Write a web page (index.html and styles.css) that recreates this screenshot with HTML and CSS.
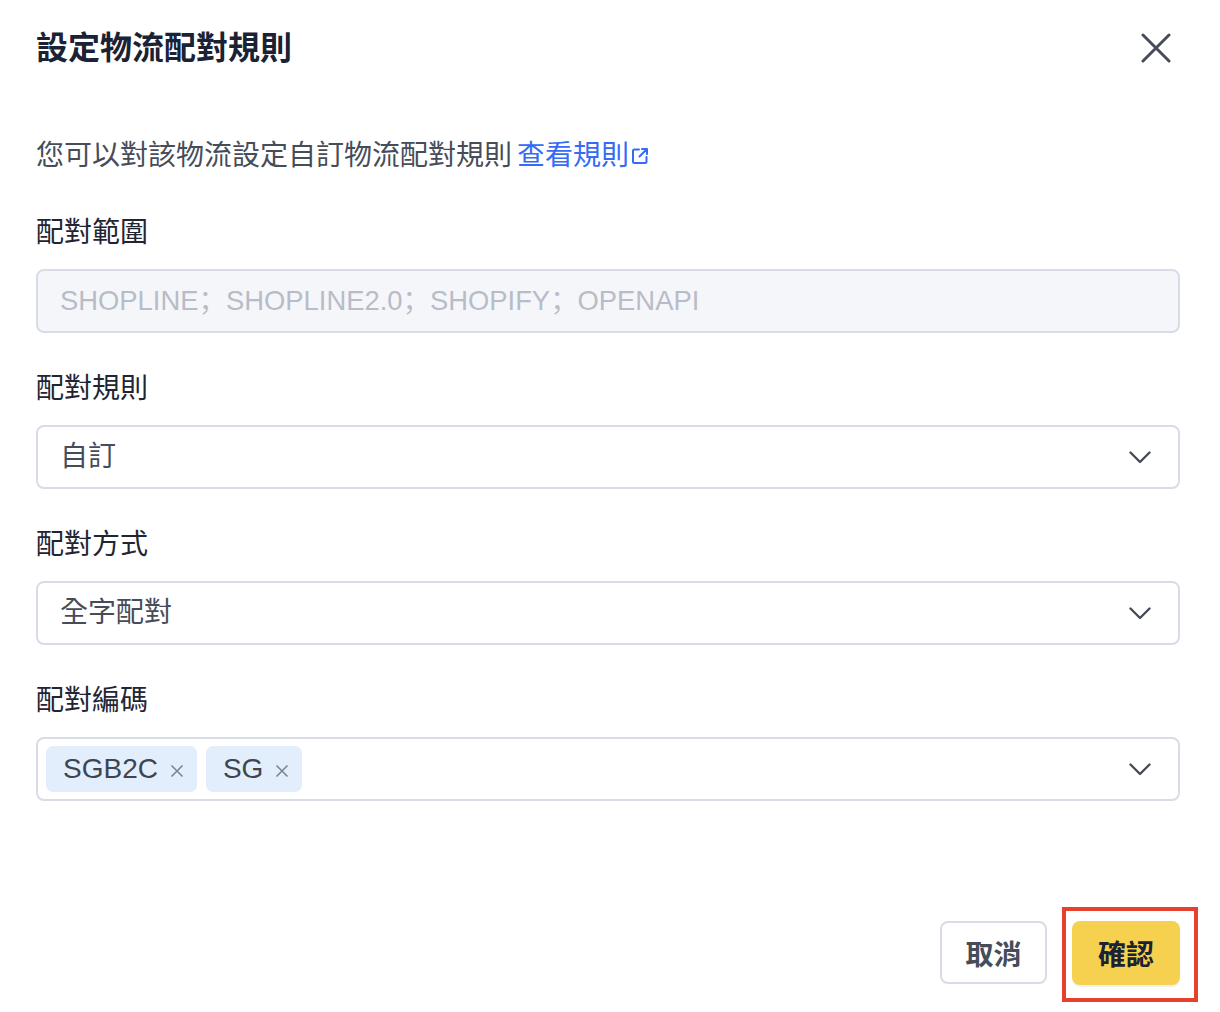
FILE: index.html
```html
<!DOCTYPE html>
<html lang="zh-Hant">
<head>
<meta charset="utf-8">
<title>設定物流配對規則</title>
<link rel="stylesheet" href="styles.css">
</head>
<body>
<div class="dialog">
  <header class="dialog-header">
    <h1 class="dialog-title">設定物流配對規則</h1>
    <button class="close-btn" aria-label="關閉">
      <svg width="30" height="30" viewBox="0 0 30 30"><path d="M2 2 L28 28 M28 2 L2 28" stroke="#474c59" stroke-width="3" stroke-linecap="round" fill="none"/></svg>
    </button>
  </header>

  <main class="dialog-body">
    <p class="intro">您可以對該物流設定自訂物流配對規則<a class="link" href="#">查看規則<svg class="ext-icon" width="20" height="20" viewBox="0 0 20 20"><path d="M9 3.5 H4.5 A1.5 1.5 0 0 0 3 5 V15.5 A1.5 1.5 0 0 0 4.5 17 H15 A1.5 1.5 0 0 0 16.5 15.5 V11" stroke="#356bf5" stroke-width="2" fill="none" stroke-linecap="round"/><path d="M12 3 H17 V8 M17 3 L9.5 10.5" stroke="#356bf5" stroke-width="2" fill="none" stroke-linecap="round" stroke-linejoin="round"/></svg></a></p>

    <div class="form-item">
      <label class="form-label">配對範圍</label>
      <div class="field field-disabled" lang="zh-Hans">SHOPLINE；SHOPLINE2.0；SHOPIFY；OPENAPI</div>
    </div>

    <div class="form-item">
      <label class="form-label">配對規則</label>
      <div class="field field-select">
        <span class="value">自訂</span>
        <svg class="chevron" width="22" height="13" viewBox="0 0 22 13"><path d="M1.5 1.5 L11 11 L20.5 1.5" stroke="#474c59" stroke-width="2.4" fill="none" stroke-linecap="round" stroke-linejoin="round"/></svg>
      </div>
    </div>

    <div class="form-item">
      <label class="form-label">配對方式</label>
      <div class="field field-select">
        <span class="value">全字配對</span>
        <svg class="chevron" width="22" height="13" viewBox="0 0 22 13"><path d="M1.5 1.5 L11 11 L20.5 1.5" stroke="#474c59" stroke-width="2.4" fill="none" stroke-linecap="round" stroke-linejoin="round"/></svg>
      </div>
    </div>

    <div class="form-item">
      <label class="form-label">配對編碼</label>
      <div class="field field-select field-tags">
        <div class="tags">
          <span class="tag">SGB2C<svg class="tag-x" width="14" height="14" viewBox="0 0 14 14"><path d="M1.5 1.5 L12.5 12.5 M12.5 1.5 L1.5 12.5" stroke="#7f8390" stroke-width="1.6" fill="none"/></svg></span>
          <span class="tag">SG<svg class="tag-x" width="14" height="14" viewBox="0 0 14 14"><path d="M1.5 1.5 L12.5 12.5 M12.5 1.5 L1.5 12.5" stroke="#7f8390" stroke-width="1.6" fill="none"/></svg></span>
        </div>
        <svg class="chevron" width="22" height="13" viewBox="0 0 22 13"><path d="M1.5 1.5 L11 11 L20.5 1.5" stroke="#474c59" stroke-width="2.4" fill="none" stroke-linecap="round" stroke-linejoin="round"/></svg>
      </div>
    </div>
  </main>

  <footer class="dialog-footer">
    <button class="btn btn-default">取消</button>
    <button class="btn btn-primary">確認</button>
  </footer>

  <div class="highlight-box"></div>
</div>
</body>
</html>
```

FILE: styles.css
```css
* {
  box-sizing: border-box;
}

html, body {
  margin: 0;
  padding: 0;
  background: #ffffff;
}

body {
  font-family: "Liberation Sans", "Noto Sans CJK TC", sans-serif;
  color: #1f2533;
  text-spacing-trim: space-all;
}

.dialog {
  position: relative;
  width: 1220px;
  height: 1012px;
  display: flex;
  flex-direction: column;
  padding: 0 40px 0 36px;
}

.dialog-header {
  display: flex;
  align-items: center;
  justify-content: space-between;
  height: 44px;
  margin-top: 26px;
}

.dialog-title {
  margin: 0;
  font-size: 32px;
  line-height: 44px;
  font-weight: 700;
  color: #1a2233;
}

.close-btn {
  border: none;
  background: none;
  padding: 0;
  margin-right: 9px;
  width: 30px;
  height: 30px;
  display: flex;
}

.dialog-body {
  display: flex;
  flex-direction: column;
}

.intro {
  margin: 66px 0 37px;
  font-size: 28px;
  line-height: 40px;
  color: #474c59;
}

.link {
  color: #356bf5;
  text-decoration: none;
  margin-left: 5px;
}

.ext-icon {
  vertical-align: -1px;
  margin-left: 1px;
}

.form-item {
  display: flex;
  flex-direction: column;
  margin-bottom: 36px;
}

.form-label {
  font-size: 28px;
  line-height: 40px;
  margin-bottom: 16px;
  color: #1f2533;
}

.field {
  height: 64px;
  border: 2px solid #d9dbe6;
  border-radius: 8px;
  display: flex;
  align-items: center;
  padding: 0 27px 0 22px;
  font-size: 28px;
  line-height: 1;
  color: #474c59;
}

.field-disabled {
  background: #f5f6fa;
  color: #b8bcc8;
  font-family: "Liberation Sans", "Noto Sans CJK SC", sans-serif;
  font-size: 27.4px;
}

.field-select {
  justify-content: space-between;
  background: #ffffff;
}

.chevron {
  flex: none;
}

.field-tags {
  padding-left: 8px;
}

.tags {
  display: flex;
  gap: 9px;
}

.tag {
  display: inline-flex;
  align-items: center;
  height: 46px;
  padding: 0 13px 0 17px;
  background: #e3eefc;
  border-radius: 7px;
  color: #3f4452;
  font-size: 28px;
}

.tag-x {
  margin-left: 12px;
  margin-top: 3px;
}

.dialog-footer {
  margin-top: auto;
  padding-bottom: 27px;
  display: flex;
  justify-content: flex-end;
  gap: 25px;
}

.btn {
  height: 64px;
  padding: 0;
  display: flex;
  align-items: center;
  justify-content: center;
  border-radius: 8px;
  font-family: inherit;
  font-size: 28px;
  font-weight: 700;
  white-space: nowrap;
  cursor: pointer;
}

.btn-default {
  width: 107px;
  height: 63px;
  background: #ffffff;
  border: 2px solid #d9dbe6;
  color: #474c59;
}

.btn-primary {
  width: 108px;
  background: #f6d04f;
  border: none;
  color: #1a2233;
  box-shadow: 0 2px 0 rgba(0, 0, 0, 0.06);
}

.highlight-box {
  position: absolute;
  left: 1062px;
  top: 907px;
  width: 136px;
  height: 95px;
  border: 4px solid #e5412d;
  pointer-events: none;
}
```
